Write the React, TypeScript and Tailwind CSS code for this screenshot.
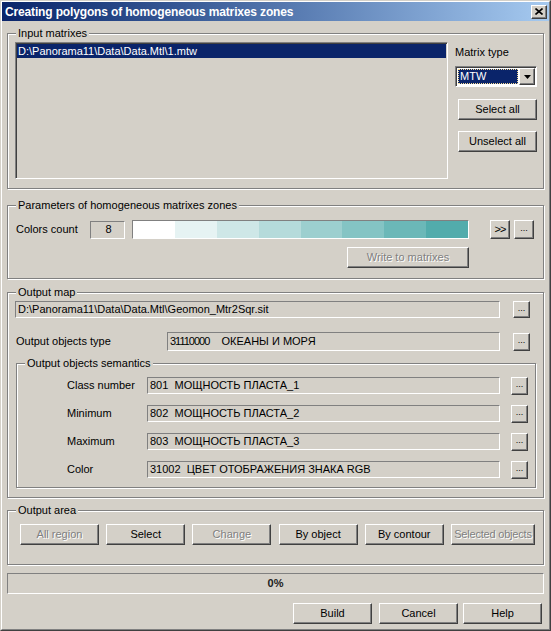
import React from 'react';

const raised =
  'border border-t-white border-l-white border-b-[#404040] border-r-[#404040] shadow-[inset_-1px_-1px_0_#808080]';
const sunken = 'border border-t-[#808080] border-l-[#808080] border-b-white border-r-white';
const deepSunken =
  'border border-t-[#808080] border-l-[#808080] border-b-white border-r-white shadow-[inset_1px_1px_0_#404040]';

const COLORS = ['#FFFFFF', '#E6F3F3', '#CEE7E7', '#B5DBDB', '#9CCFCF', '#84C4C4', '#6BB8B8', '#52ACAC'];

function Btn({
  children,
  className = '',
  disabled = false,
}: {
  children: React.ReactNode;
  className?: string;
  disabled?: boolean;
}) {
  return (
    <div
      className={`${raised} flex shrink-0 items-center justify-center whitespace-nowrap bg-[#D4D0C8] leading-[13px] ${
        disabled ? 'text-[#808080] [text-shadow:1px_1px_0_#fff]' : 'text-black'
      } ${className}`}
    >
      {children}
    </div>
  );
}

function Group({ label, className = '', children }: { label: string; className?: string; children: React.ReactNode }) {
  return (
    <div className={`flex shrink-0 flex-col border border-[#808080] shadow-[inset_1px_1px_0_#fff,1px_1px_0_#fff] ${className}`}>
      <div className="-mt-[7px] ml-[8px] h-[13px] self-start whitespace-nowrap bg-[#D4D0C8] px-[2px] leading-[13px]">
        {label}
      </div>
      {children}
    </div>
  );
}

function Field({ children, className = '' }: { children?: React.ReactNode; className?: string }) {
  return (
    <div className={`${sunken} flex shrink-0 items-center whitespace-pre pl-[2px] leading-[13px] ${className}`}>
      {children}
    </div>
  );
}

function SemRow({ label, value, first = false }: { label: string; value: string; first?: boolean }) {
  return (
    <div className={`flex h-[17px] items-center ${first ? 'mt-[7px]' : 'mt-[11px]'}`}>
      <div className="ml-[50px] w-[80px] whitespace-nowrap">{label}</div>
      <Field className="h-[17px] w-[353px]">{value}</Field>
      <Btn className="ml-[11px] h-[18px] w-[17px] pb-[3px] text-[9px]">...</Btn>
    </div>
  );
}

export default function App() {
  return (
    <div className="h-[631px] w-[551px] border border-t-[#D4D0C8] border-l-[#D4D0C8] border-b-[#404040] border-r-[#404040] bg-[#D4D0C8] font-['Liberation_Sans',Arial,sans-serif] text-[11px] text-black">
      <div className="flex h-full flex-col border border-t-white border-l-white border-b-[#808080] border-r-[#808080]">
        {/* Title bar */}
        <div className="flex h-[19px] shrink-0 items-center justify-between bg-linear-to-r from-[#0A246A] to-[#A6CAF0] pl-[3px] pr-[2px]">
          <span className="whitespace-nowrap text-[12px] font-bold tracking-[-0.15px] text-white">
            Creating polygons of homogeneous matrixes zones
          </span>
          <div className={`${raised} flex h-[14px] w-[16px] items-center justify-center bg-[#D4D0C8]`}>
            <svg width="8" height="7" viewBox="0 0 8 7">
              <path d="M0.5 0.5 L7.5 6.5 M7.5 0.5 L0.5 6.5" stroke="#000" strokeWidth="1.6" />
            </svg>
          </div>
        </div>

        <div className="flex flex-col px-[5px]">
          {/* Input matrixes */}
          <Group label="Input matrixes" className="mt-[12px] h-[156px]">
            <div className="mt-[2px] flex">
              <div className={`${deepSunken} ml-[7px] h-[137px] w-[433px] p-[1px]`}>
                <div className="h-[14px] whitespace-nowrap bg-[#0A246A] pl-[1px] leading-[14px] text-white">
                  D:\Panorama11\Data\Data.Mtl\1.mtw
                </div>
              </div>
              <div className="ml-[7px] flex w-[82px] flex-col">
                <div className="mt-[4px] whitespace-nowrap leading-[13px]">Matrix type</div>
                <div className={`${deepSunken} mt-[7px] flex h-[21px] w-[82px] bg-white p-[1px]`}>
                  <div className="flex flex-1 p-[1px]">
                    <div className="flex flex-1 items-center border border-dotted border-[#F5DB95] bg-[#0A246A] pl-[1px] text-white">
                      MTW
                    </div>
                  </div>
                  <div className={`${raised} flex w-[16px] items-center justify-center bg-[#D4D0C8]`}>
                    <svg width="7" height="4" viewBox="0 0 7 4">
                      <path d="M0 0 H7 L3.5 4 Z" fill="#000" />
                    </svg>
                  </div>
                </div>
                <Btn className="ml-[3px] mt-[12px] h-[21px] w-[79px]">Select all</Btn>
                <Btn className="ml-[3px] mt-[11px] h-[21px] w-[79px]">Unselect all</Btn>
              </div>
            </div>
          </Group>

          {/* Parameters */}
          <Group label="Parameters of homogeneous matrixes zones" className="mt-[16px] h-[74px]">
            <div className="mt-[8px] flex h-[19px] items-center">
              <div className="ml-[8px] w-[74px] whitespace-nowrap">Colors count</div>
              <Field className="h-[18px] w-[35px] justify-center pl-0">8</Field>
              <div className={`${sunken} ml-[7px] flex h-[19px] w-[337px]`}>
                {COLORS.map((c) => (
                  <div key={c} className="flex-1" style={{ backgroundColor: c }} />
                ))}
              </div>
              <Btn className="ml-[21px] h-[19px] w-[20px] tracking-[-1px]">&gt;&gt;</Btn>
              <Btn className="ml-[4px] h-[19px] w-[20px] pb-[3px] text-[9px]">...</Btn>
            </div>
            <Btn disabled className="ml-[339px] mt-[8px] h-[21px] w-[122px]">
              Write to matrixes
            </Btn>
          </Group>

          {/* Output map */}
          <Group label="Output map" className="mt-[13px] h-[206px]">
            <div className="mt-[2px] flex h-[17px] items-center">
              <Field className="ml-[7px] h-[17px] w-[485px]">D:\Panorama11\Data\Data.Mtl\Geomon_Mtr2Sqr.sit</Field>
              <Btn className="ml-[13px] h-[17px] w-[17px] pb-[3px] text-[9px]">...</Btn>
            </div>
            <div className="mt-[14px] flex h-[19px] items-center">
              <div className="ml-[8px] w-[151px] whitespace-nowrap">Output objects type</div>
              <Field className="h-[19px] w-[333px]">
                <span className="tracking-[-1px]">31110000</span>
                {'    ОКЕАНЫ И МОРЯ'}
              </Field>
              <Btn className="ml-[13px] h-[18px] w-[17px] pb-[3px] text-[9px]">...</Btn>
            </div>
            <Group label="Output objects semantics" className="ml-[8px] mt-[12px] h-[125px] w-[520px]">
              <SemRow first label="Class number" value="801  МОЩНОСТЬ ПЛАСТА_1" />
              <SemRow label="Minimum" value="802  МОЩНОСТЬ ПЛАСТА_2" />
              <SemRow label="Maximum" value="803  МОЩНОСТЬ ПЛАСТА_3" />
              <SemRow label="Color" value="31002  ЦВЕТ ОТОБРАЖЕНИЯ ЗНАКА RGB" />
            </Group>
          </Group>

          {/* Output area */}
          <Group label="Output area" className="mt-[12px] h-[55px]">
            <div className="ml-[12px] mt-[7px] flex gap-[7.2px]">
              <Btn disabled className="h-[21px] w-[79px]">All region</Btn>
              <Btn className="h-[21px] w-[79px]">Select</Btn>
              <Btn disabled className="h-[21px] w-[79px]">Change</Btn>
              <Btn className="h-[21px] w-[79px]">By object</Btn>
              <Btn className="h-[21px] w-[79px]">By contour</Btn>
              <Btn disabled className="h-[21px] w-[84px] tracking-[-0.2px]">Selected objects</Btn>
            </div>
          </Group>

          {/* Progress */}
          <div className={`${sunken} mt-[8px] flex h-[21px] items-center justify-center font-bold text-[#202020]`}>
            0%
          </div>

          {/* Buttons */}
          <div className="mt-[9px] flex justify-end pr-[2px]">
            <Btn className="h-[21px] w-[79px]">Build</Btn>
            <Btn className="ml-[7px] h-[21px] w-[79px]">Cancel</Btn>
            <Btn className="ml-[5px] h-[21px] w-[79px]">Help</Btn>
          </div>
        </div>
      </div>
    </div>
  );
}
